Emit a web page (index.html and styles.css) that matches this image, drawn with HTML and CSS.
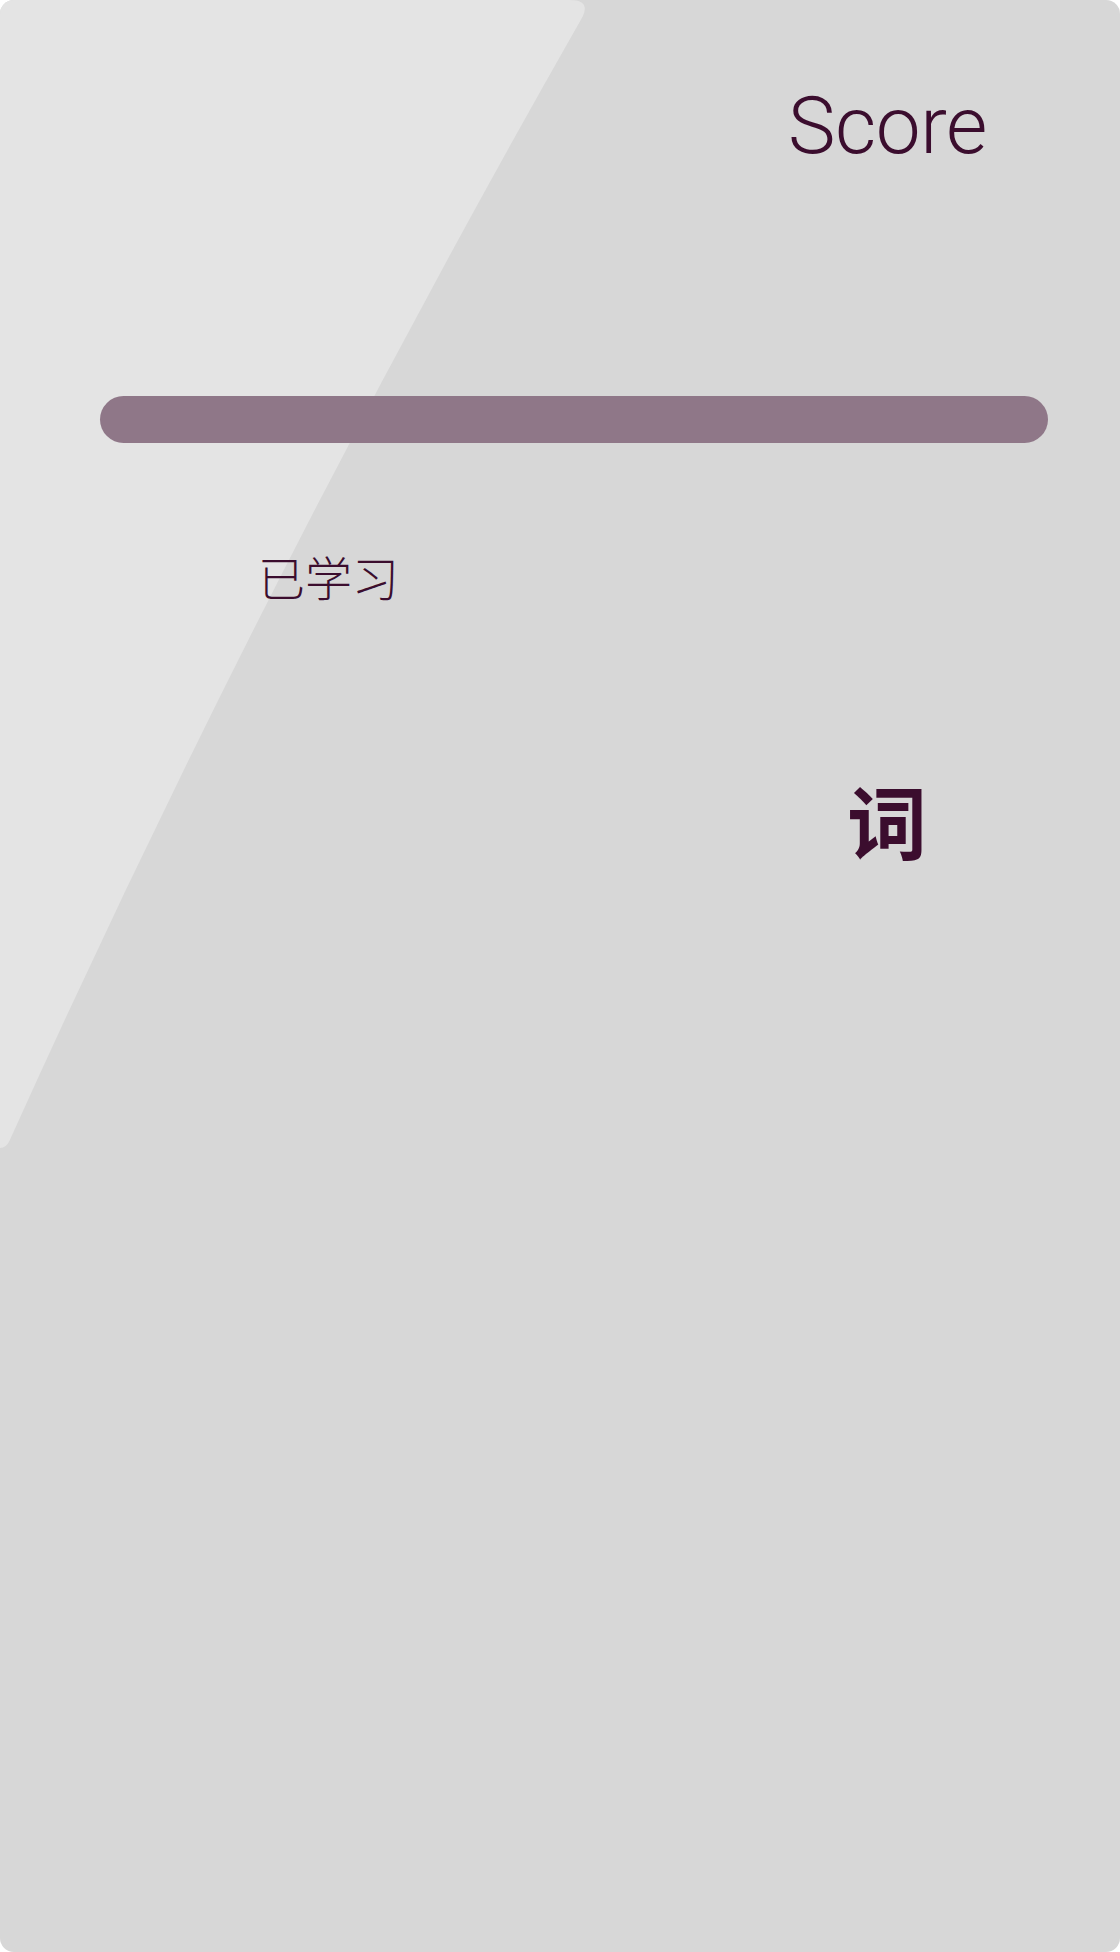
FILE: index.html
```html
<!DOCTYPE html>
<html lang="zh">
<head>
<meta charset="utf-8">
<title>Score</title>
<link rel="stylesheet" href="styles.css">
</head>
<body>
<div class="card">
  <svg class="shine" width="620" height="1160" viewBox="0 0 620 1160" aria-hidden="true">
    <path d="M0 0 L570 0 Q590 0 583 16 Q263 578 9.4 1141 Q6.5 1147.5 0 1148 Z" fill="#e4e4e4"/>
  </svg>
  <div class="content">
    <header class="header"><h1 class="title">Score</h1></header>
    <div class="bar"></div>
    <div class="learned">已学习</div>
    <div class="word">词</div>
  </div>
</div>
</body>
</html>
```
FILE: styles.css
```css
html, body {
  margin: 0;
  padding: 0;
  background: #ffffff;
}
.card {
  position: relative;
  width: 1120px;
  height: 1952px;
  background: #d7d7d7;
  border-radius: 14px;
  overflow: hidden;
}
.shine {
  position: absolute;
  left: 0;
  top: 0;
  display: block;
}
.content {
  position: relative;
  display: flex;
  flex-direction: column;
  padding-top: 86px;
}
.header {
  display: flex;
  justify-content: flex-end;
  padding-right: 133px;
}
.title {
  margin: 0;
  font-family: Roboto, "Liberation Sans", sans-serif;
  font-weight: 300;
  font-size: 80px;
  line-height: 80px;
  letter-spacing: -0.4px;
  color: #3b0d2e;
}
.bar {
  margin: 230px 72px 0 100px;
  height: 47px;
  border-radius: 24px;
  background: #8f7788;
}
.learned {
  margin: 109px 0 0 258px;
  font-family: "Noto Sans CJK SC", sans-serif;
  font-weight: 200;
  font-size: 47px;
  line-height: 47px;
  color: #3b0d2e;
}
.word {
  margin: 179px 0 0 847px;
  font-family: "Noto Sans CJK SC", sans-serif;
  font-weight: 700;
  font-size: 80px;
  line-height: 80px;
  color: #3b0d2e;
}
```
